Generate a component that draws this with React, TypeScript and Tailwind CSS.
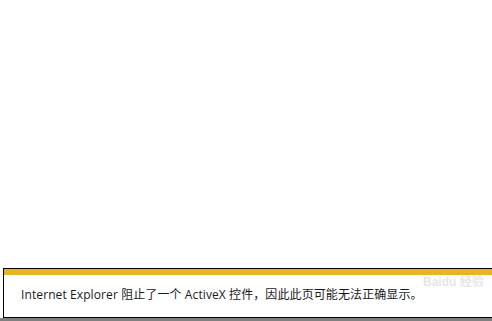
import React from "react";

export default function App() {
  return (
    <div className="w-[492px] h-[321px] bg-white flex flex-col overflow-hidden" style={{ fontFamily: '"Open Sans", "Noto Sans CJK SC", sans-serif' }}>
      <div className="h-[268px] shrink-0" />
      <div className="ml-[3px] flex-1 flex flex-col border-t border-l border-b border-black bg-white relative">
        <div className="h-[6px] bg-[#e8b425] shrink-0" />
        <div className="flex-1 flex items-center pl-[17px] pb-[2px]">
          <span className="text-[12px] leading-none tracking-[0.1px] text-[#1a1a1a] whitespace-nowrap">
            Internet Explorer 阻止了一个 ActiveX 控件，因此此页可能无法正确显示。
          </span>
        </div>
        <div className="absolute left-[419px] top-[7px] text-[12px] font-bold leading-none text-[#e6e6e6] whitespace-nowrap" style={{ fontFamily: '"Liberation Sans", "Noto Sans CJK SC", sans-serif' }}>
          Baidu 经验
        </div>
      </div>
      <div className="h-[3px] bg-[#808080] shrink-0" />
    </div>
  );
}
